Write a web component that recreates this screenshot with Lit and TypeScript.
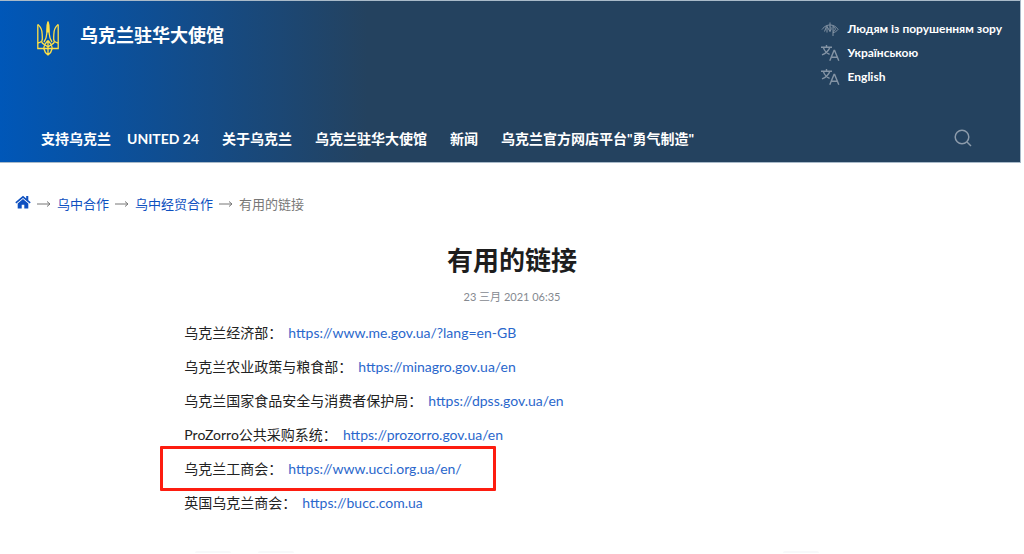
import { LitElement, html, css } from "lit";
import { customElement } from "lit/decorators.js";

const translateIcon = html`
  <svg class="icon" viewBox="0 0 20 18" aria-hidden="true">
    <path d="M1 3.2h11M6.5 1v2M9.8 3.4C8.6 6.800 5.800 9.300 2 10.800M3.400 3.600C4.400 6.700 6.800 9.200 9.600 10.400" />
    <path d="M9.800 16.800l4.200-10.400h.6l4.200 10.400M11.300 13.300h6" />
  </svg>`;

const visionIcon = html`
  <svg class="icon thin" viewBox="0 0 20 18" aria-hidden="true">
    <path d="M2 9.500C4.500 6 7.500 5 10 5s6 1 8 4.500c-1.500 1.800-3 2.800-5 3.200" />
    <path d="M4.500 11.500l2-5M7 6v6.500M10 2.500v9M7 6.500l3 5M10 6.500c1.500 1 1.500 3 0 5M13 6v10M13 6.800c3 0 3 4.400 0 4.400" />
  </svg>`;

const trident = html`
  <svg class="trident" viewBox="0 0 24 38" aria-hidden="true">
    <path d="M1.800 4.500v24h20.400v-24" />
    <path d="M1.800 4.500c3.400 2.500 4.400 6 4.400 10 0 2.800.6 5-.4 6.500-.8 1.200-2.400 1.800-4 2M22.200 4.500c-3.400 2.500-4.400 6-4.400 10 0 2.800-.6 5 .4 6.500.8 1.200 2.400 1.800 4 2" />
    <path d="M12 1.500c-1.600 4-1 8-1.200 12-.2 3.500-1 6-2.800 8.500M12 1.500c1.600 4 1 8 1.200 12 .2 3.500 1 6 2.800 8.500M12 1.500v11" />
    <path d="M5.500 21.500c.5 2.500 3.500 3 6.500 5.500 3-2.500 6-3 6.500-5.500M12 20.500v15M12 20.500c-2.400 2.500-4.200 4.500-4.200 8 .6 3 2.200 5 4.200 6.500 2-1.500 3.600-3.500 4.200-6.500 0-3.500-1.800-5.500-4.200-8" />
  </svg>`;

const arrow = html`
  <svg class="arrow" viewBox="0 0 14 8" aria-hidden="true">
    <path d="M0 4h13M10 1.500L13 4l-3 2.500" />
  </svg>`;

const services = [
  { icon: visionIcon, label: "Людям із порушенням зору", lang: "uk" },
  { icon: translateIcon, label: "Українською", lang: "uk" },
  { icon: translateIcon, label: "English", lang: "en" },
];

const menu = ["支持乌克兰", "UNITED 24", "关于乌克兰", "乌克兰驻华大使馆", "新闻", '乌克兰官方网店平台"勇气制造"'];

const links = [
  { name: "乌克兰经济部：", url: "https://www.me.gov.ua/?lang=en-GB" },
  { name: "乌克兰农业政策与粮食部：", url: "https://minagro.gov.ua/en" },
  { name: "乌克兰国家食品安全与消费者保护局：", url: "https://dpss.gov.ua/en" },
  { name: "ProZorro公共采购系统：", url: "https://prozorro.gov.ua/en" },
  { name: "乌克兰工商会：", url: "https://www.ucci.org.ua/en/", marked: true },
  { name: "英国乌克兰商会：", url: "https://bucc.com.ua" },
];

@customElement("app-root")
export class AppRoot extends LitElement {
  static styles = css`
    :host {
      display: block;
      background: #fff;
      color: #222;
      font: 14px/20px Lato, "Noto Sans CJK SC", sans-serif;
    }
    a { color: inherit; text-decoration: none; }
    svg { display: block; fill: none; stroke: currentColor; flex: none; }
    ul, ol { list-style: none; margin: 0; padding: 0; }
    .header {
      margin-right: 3px;
      border: solid #a9bac9;
      border-width: 1px 1px 1px 0;
      background: linear-gradient(90deg, #0057b8 0, #24425f 36%);
      color: #fff;
      font-weight: 700;
    }
    .top {
      display: flex;
      justify-content: space-between;
      padding: 16px 18px 0 36px;
    }
    .brand {
      display: flex;
      align-items: flex-start;
      gap: 20px;
      font-size: 18px;
      line-height: 36px;
    }
    .trident { width: 24px; height: 38px; margin-top: 3px; color: #ffe047; stroke-width: 1.3; }
    .services { display: flex; flex-direction: column; }
    .service {
      display: flex;
      align-items: center;
      gap: 8px;
      font-size: 12px;
      line-height: 24px;
    }
    .icon { width: 20px; height: 18px; color: #8494a5; stroke-width: 1.4; }
    .thin { stroke-width: 1; }
    .bar {
      display: flex;
      align-items: flex-start;
      justify-content: space-between;
      padding: 40px 48px 13px 41px;
    }
    .menu { display: flex; gap: 23px; }
    .menu li:first-child { margin-right: -7px; }
    .search {
      padding: 0;
      border: 0;
      background: none;
      color: #8c9bab;
    }
    .search svg { width: 18px; height: 18px; stroke-width: 1.5; }
    .crumbs {
      display: flex;
      align-items: center;
      gap: 6px;
      padding: 31px 15px 0;
      font-size: 13px;
      color: #777;
    }
    .crumbs li { display: flex; align-items: center; gap: 6px; }
    .crumbs a { color: #0e50c0; }
    .home { width: 16px; height: 14px; margin-bottom: 4px; fill: currentColor; stroke: none; }
    .arrow { width: 14px; height: 8px; color: #777; }
    .article {
      display: flex;
      flex-direction: column;
      align-items: center;
    }
    .title {
      margin: 26px 0 0;
      font-size: 26px;
      line-height: 40px;
      font-weight: 700;
      color: #1d1d1d;
    }
    .date { margin-top: 7px; font-size: 11px; color: #858990; }
    .links {
      box-sizing: border-box;
      width: 100%;
      padding: 9px 18%;
    }
    .row {
      position: relative;
      display: flex;
      gap: 6px;
      line-height: 34px;
    }
    .row a { color: #2a67cc; }
    .marked::after {
      content: "";
      position: absolute;
      left: -24px;
      top: -6px;
      width: 330px;
      height: 39px;
      border: 3px solid #fd1d10;
      border-radius: 1px;
      pointer-events: none;
    }
    .share {
      display: flex;
      gap: 27px;
      padding: 22px 20% 0 19%;
    }
    .tab { width: 36px; height: 2px; border-radius: 2px 2px 0 0; background: #f8f8fa; }
    .tab:last-child { margin-left: auto; }
  `;

  render() {
    return html`
      <header class="header">
        <div class="top">
          <a class="brand" href="#">${trident}<span>乌克兰驻华大使馆</span></a>
          <ul class="services">
            ${services.map((s) => html`<li><a class="service" href="#" lang=${s.lang}>${s.icon}<span>${s.label}</span></a></li>`)}
          </ul>
        </div>
        <div class="bar">
          <nav>
            <ul class="menu">${menu.map((m) => html`<li><a href="#">${m}</a></li>`)}</ul>
          </nav>
          <button class="search" type="button" aria-label="搜索">
            <svg viewBox="0 0 18 18" aria-hidden="true"><circle cx="8" cy="8" r="6.800" /><path d="M13 13l4 4" /></svg>
          </button>
        </div>
      </header>
      <nav>
        <ol class="crumbs">
          <li>
            <a href="#" aria-label="首页">
              <svg class="home" viewBox="0 0 16 14"><path d="M8 .8L.3 7.300l1 1.100L8 2.900l6.700 5.500 1-1.100-2.400-2V1h-2.100v2.500zM8 4.100L2.700 8.500V13.500h4V9.700h2.600v3.800h4v-5z" /></svg>
            </a>
          </li>
          <li>${arrow}<a href="#">乌中合作</a></li>
          <li>${arrow}<a href="#">乌中经贸合作</a></li>
          <li>${arrow}<span>有用的链接</span></li>
        </ol>
      </nav>
      <main class="article">
        <h1 class="title">有用的链接</h1>
        <time class="date" datetime="2021-03-23T06:35">23 三月 2021 06:35</time>
        <ul class="links">
          ${links.map((l) => html`<li class="row ${l.marked ? "marked" : ""}"><span>${l.name}</span><a href=${l.url}>${l.url}</a></li>`)}
        </ul>
      </main>
      <div class="share"><div class="tab"></div><div class="tab"></div><div class="tab"></div></div>
    `;
  }
}
